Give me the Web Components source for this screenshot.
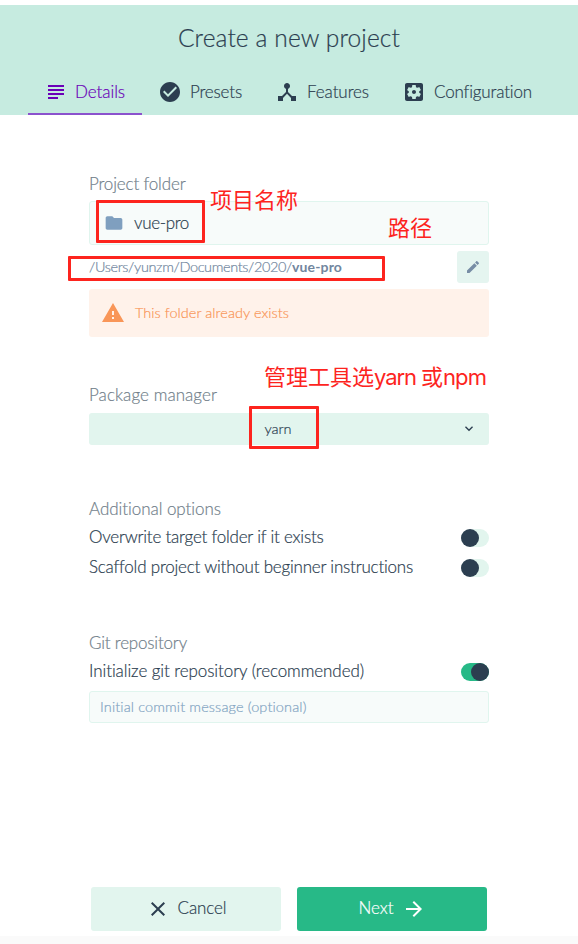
<!DOCTYPE html>
<html lang="en">
<head>
<meta charset="utf-8">
<title>Create a new project</title>
<style>
html,body{margin:0;height:944px;overflow:hidden;background:#fff}
body{font-family:Lato,"Noto Sans CJK SC",sans-serif;font-weight:300;font-size:17px;color:#2c3e50;-webkit-text-stroke:.2px currentColor}
</style>
</head>
<body>
<project-wizard></project-wizard>
<script>
const define = (name, html, init) => customElements.define(name, class extends HTMLElement {
  constructor() {
    super();
    const t = document.createElement('template');
    t.innerHTML = html;
    this.attachShadow({mode: 'open'}).append(t.content.cloneNode(true));
  }
  connectedCallback() { if (init) init(this, this.shadowRoot); }
});

/* Single-line text whose tracking is tuned to an advance width. */
define('fit-text', `<style>
:host{display:inline-block;white-space:nowrap;flex:none}
span{display:inline-block;font-kerning:normal;font-variant-ligatures:none}
</style><span><slot></slot></span>`, (el, root) => {
  const w = +el.getAttribute('w'), s = root.querySelector('span');
  const n = [...el.textContent].length;
  s.style.letterSpacing = ((w - s.getBoundingClientRect().width) / n) + 'px';
  el.style.width = w + 'px';
});

const icons = {
  subject: '<path d="M14 17H4v2h10v-2zm6-8H4v2h16V9zM4 15h16v-2H4v2zM4 5v2h16V5H4z"/>',
  check: '<path d="M12 2C6.48 2 2 6.48 2 12s4.480 10 10 10 10-4.480 10-10S17.520 2 12 2zm-2 15l-5-5 1.410-1.410L10 14.170l7.590-7.590L19 8l-9 9z"/>',
  hub: '<path d="M17 16l-4-4V8.820C14.160 8.400 15 7.300 15 6c0-1.660-1.340-3-3-3S9 4.340 9 6c0 1.300.84 2.400 2 2.820V12l-4 4H3v5h5v-3.050l4-4.200 4 4.200V21h5v-5h-4z"/>',
  settings: '<path d="M12 10c-1.100 0-2 .9-2 2s.9 2 2 2 2-.9 2-2-.9-2-2-2zm7-7H5c-1.110 0-2 .9-2 2v14c0 1.100.89 2 2 2h14c1.110 0 2-.9 2-2V5c0-1.100-.89-2-2-2zm-1.750 9c0 .23-.02.46-.05.68l1.480 1.160c.13.110.17.300.08.450l-1.400 2.420c-.09.150-.27.210-.43.150l-1.740-.7c-.36.280-.76.510-1.180.69l-.26 1.850c-.03.170-.18.300-.35.300h-2.800c-.17 0-.32-.13-.35-.29l-.26-1.850c-.43-.18-.82-.41-1.180-.69l-1.740.7c-.16.060-.34 0-.43-.15l-1.400-2.420c-.09-.15-.05-.34.080-.45l1.480-1.160c-.03-.23-.05-.46-.05-.69 0-.23.020-.46.050-.68l-1.480-1.160c-.13-.11-.17-.3-.08-.45l1.400-2.420c.09-.15.270-.21.430-.15l1.740.7c.36-.28.76-.51 1.180-.69l.26-1.850c.03-.17.180-.3.350-.3h2.800c.17 0 .32.130.35.290l.26 1.850c.43.180.82.410 1.180.69l1.740-.7c.16-.06.34 0 .43.150l1.400 2.420c.09.150.050.340-.08.450l-1.480 1.160c.03.230.050.460.050.690z"/>',
  folder: '<path d="M10 4H4c-1.100 0-1.990.9-1.990 2L2 18c0 1.100.9 2 2 2h16c1.100 0 2-.9 2-2V8c0-1.100-.9-2-2-2h-8l-2-2z"/>',
  edit: '<path d="M3 17.250V21h3.750L17.810 9.940l-3.750-3.750L3 17.250zM20.710 7.040c.39-.39.39-1.020 0-1.410l-2.340-2.340c-.39-.39-1.020-.39-1.410 0l-1.830 1.830 3.750 3.750 1.830-1.830z"/>',
  warning: '<path d="M1 21h22L12 2 1 21zm12-3h-2v-2h2v2zm0-4h-2v-4h2v4z"/>',
  down: '<path d="M7.410 7.840L12 12.420l4.590-4.580L18 9.250l-6 6-6-6z"/>',
  close: '<path d="M19 6.410L17.590 5 12 10.590 6.410 5 5 6.410 10.590 12 5 17.590 6.410 19 12 13.410 17.590 19 19 17.590 13.410 12z"/>',
  arrow: '<path d="M12 4l-1.410 1.410L16.170 11H4v2h12.170l-5.580 5.590L12 20l8-8z"/>'
};
define('ui-icon', `<style>
:host{display:block;flex:none;width:24px;height:24px}
svg{display:block;width:100%;height:100%;fill:currentColor}
</style><svg viewBox="0 0 24 24"></svg>`, (el, root) => {
  root.querySelector('svg').innerHTML = icons[el.getAttribute('name')];
  const s = el.getAttribute('size');
  if (s) el.style.width = el.style.height = s + 'px';
});

define('wizard-tab', `<style>
:host{display:flex;box-sizing:border-box;height:44px;align-items:center;padding-left:16px;gap:7px;line-height:24px;border-bottom:2px solid transparent}
:host(:not([active])){gap:8px}
:host([active]){color:#6a00b8;border-color:#8b52cd}
</style><slot name="icon"></slot><slot></slot>`);

define('wizard-header', `<style>
:host{display:flex;flex-direction:column;height:110px;background:#c6ebe0;border-top:5px solid #fff}
h1{margin:0;height:66px;line-height:65px;font-weight:300;font-size:24.5px;display:flex;justify-content:center}
nav{display:grid;grid-template-columns:114px 117px 127px 164px;padding-left:28px}
</style><h1><fit-text w="222">Create a new project</fit-text></h1>
<nav>
<wizard-tab active><ui-icon slot="icon" name="subject"></ui-icon><fit-text w="50">Details</fit-text></wizard-tab>
<wizard-tab><ui-icon slot="icon" name="check"></ui-icon><fit-text w="52">Presets</fit-text></wizard-tab>
<wizard-tab><ui-icon slot="icon" name="hub"></ui-icon><fit-text w="62">Features</fit-text></wizard-tab>
<wizard-tab><ui-icon slot="icon" name="settings"></ui-icon><fit-text w="98">Configuration</fit-text></wizard-tab>
</nav>`);

define('form-section', `<style>
:host{display:block}
.label{height:28px;line-height:27px;color:#727f8b;display:flex}
</style><div class="label"><slot name="label"></slot></div><slot></slot>`);

define('ui-input', `<style>
:host{display:flex;align-items:center;box-sizing:border-box;height:32px;padding:0 10px 2px;border:1px solid #e0f5ee;border-radius:3px;background:#f7fbfa;color:#83a5c3;font-size:14.5px}
:host([big]){height:44px;padding:0 14px 1px;gap:10px;color:#2c3e50;font-size:17px}
fit-text{line-height:20px}
</style><slot></slot>`);

define('path-row', `<style>
:host{display:flex;align-items:center;justify-content:space-between;height:32px;margin:6px 0;font-size:14.5px;color:#71869e}
div{display:flex;padding-bottom:1px}
b{font-weight:700;-webkit-text-stroke:0;font-size:14px}
button{width:32px;height:32px;border:0;padding:0;border-radius:3px;background:#e5f5f0;color:#778da5;display:flex;align-items:center;justify-content:center}
</style><div><fit-text w="203">/Users/yunzm/Documents/2020/</fit-text><b><fit-text w="50">vue-pro</fit-text></b></div>
<button aria-label="Edit"><ui-icon name="edit" size="16"></ui-icon></button>`);

define('ui-alert', `<style>
:host{display:flex;align-items:center;box-sizing:border-box;height:48px;padding-left:12px;gap:10px;border-radius:3px;background:#fff2ea;color:#f99658;font-size:14.5px}
::slotted(fit-text){padding-bottom:2px}
</style><ui-icon name="warning"></ui-icon><slot></slot>`);

define('ui-select', `<style>
:host{display:grid;grid-template-columns:1fr 28px;align-items:center;height:32px;border-radius:3px;background:#e2f5ee;font-size:14.5px}
div{display:flex;justify-content:center;padding:0 0 2px 6px}
</style><div><slot></slot></div><ui-icon name="down" size="16"></ui-icon>`);

define('ui-switch', `<style>
:host{display:flex;height:30px;align-items:center;justify-content:space-between}
::slotted(fit-text){padding-bottom:3px}
i{display:flex;width:28px;height:18px;border-radius:9px;background:#e2f5ee}
i::before{content:"";width:18px;height:18px;border-radius:50%;background:#2c3e50}
:host([on]) i{background:#27b987;justify-content:flex-end}
</style><slot></slot><i></i>`);

define('ui-button', `<style>
:host{display:flex;align-items:center;justify-content:center;width:190px;height:44px;gap:8px;border-radius:3px;background:#e2f5ee}
::slotted(fit-text){padding-bottom:3px}
:host([primary]){background:#27b987;color:#fff}
</style><slot></slot>`);

/* Red callouts drawn over the form. */
define('callout-box', `<style>
:host{position:absolute;box-sizing:border-box;border:3px solid #fd241e;border-radius:1px}
</style>`);
define('callout-text', `<style>
:host{position:absolute;color:#fd241e;font:400 22px/30px Inter,"Noto Sans CJK SC",sans-serif;white-space:nowrap;display:flex;-webkit-text-stroke:0}
:host([cjk]){font-family:"Noto Sans CJK SC",sans-serif}
</style><slot></slot>`);

define('project-wizard', `<style>
:host{display:flex;flex-direction:column;position:relative;width:578px;height:944px}
main{width:400px;padding:55px 0 0 89px;height:717px}
.pm{margin-top:44px}.pm ui-select{margin-top:4px}
.opt{margin-top:50px}
.git{margin-top:46px}
.git ui-input{margin-top:4px}
footer{display:flex;justify-content:center;gap:16px;height:49px}
.edge{height:8px;background:#fafafa}
</style>
<wizard-header></wizard-header>
<main>
<form-section><fit-text slot="label" w="96.5">Project folder</fit-text>
<div style="height:3px"></div>
<ui-input big><ui-icon name="folder" size="20" style="color:#7f9fbf"></ui-icon><fit-text w="55">vue-pro</fit-text></ui-input>
<path-row></path-row>
<ui-alert><fit-text w="154">This folder already exists</fit-text></ui-alert>
</form-section>
<form-section class="pm"><fit-text slot="label" w="128">Package manager</fit-text>
<ui-select><fit-text w="27">yarn</fit-text></ui-select></form-section>
<form-section class="opt"><fit-text slot="label" w="132">Additional options</fit-text>
<ui-switch><fit-text w="234.5">Overwrite target folder if it exists</fit-text></ui-switch>
<ui-switch><fit-text w="324">Scaffold project without beginner instructions</fit-text></ui-switch></form-section>
<form-section class="git"><fit-text slot="label" w="98">Git repository</fit-text>
<ui-switch on><fit-text w="275">Initialize git repository (recommended)</fit-text></ui-switch>
<ui-input><fit-text w="206.5">Initial commit message (optional)</fit-text></ui-input></form-section>
</main>
<footer><ui-button><ui-icon name="close"></ui-icon><fit-text w="49">Cancel</fit-text></ui-button>
<ui-button primary><fit-text w="35">Next</fit-text><ui-icon name="arrow"></ui-icon></ui-button></footer>
<div class="edge"></div>
<callout-box style="left:96px;top:200px;width:109px;height:43px"></callout-box>
<callout-box style="left:68px;top:256px;width:317px;height:25px"></callout-box>
<callout-box style="left:249px;top:406px;width:70px;height:43px"></callout-box>
<callout-text cjk style="left:210px;top:183px">项目名称</callout-text>
<callout-text cjk style="left:388px;top:211px">路径</callout-text>
<callout-text style="left:264px;top:362px"><fit-text w="110">管理工具选</fit-text><fit-text w="47">yarn&nbsp;</fit-text><fit-text w="22">或</fit-text><fit-text w="43">npm</fit-text></callout-text>`);
</script>
</body>
</html>
